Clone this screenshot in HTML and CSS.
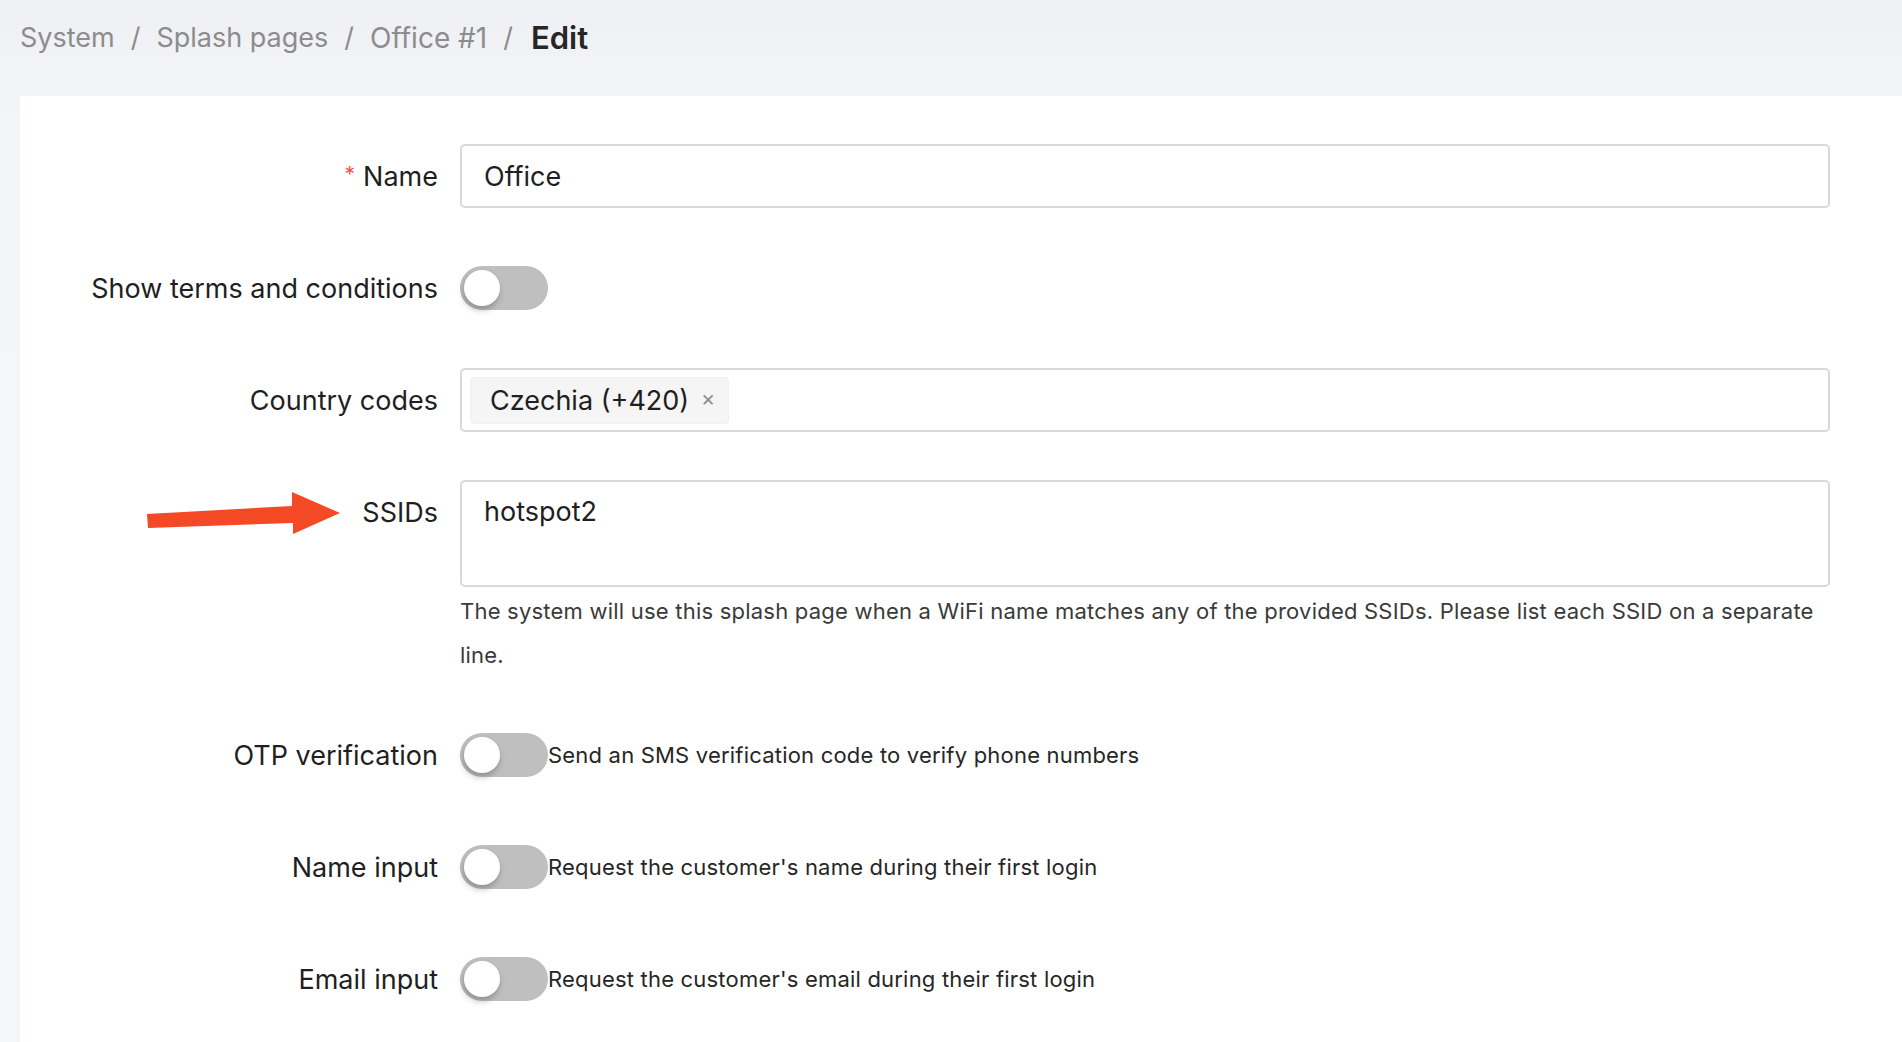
FILE: index.html
```html
<!DOCTYPE html>
<html lang="en">
<head>
<meta charset="utf-8">
<title>Edit splash page</title>
<link rel="stylesheet" href="styles.css">
</head>
<body>
<nav class="breadcrumb">
  <span class="crumb">System</span><span class="sep">/</span>
  <span class="crumb">Splash pages</span><span class="sep">/</span>
  <span class="crumb office">Office #1</span><span class="sep">/</span>
  <span class="crumb current">Edit</span>
</nav>
<main class="card">
  <form class="form">
    <div class="row">
      <div class="label"><span class="req">*</span>Name</div>
      <div class="control"><div class="input">Office</div></div>
    </div>
    <div class="row">
      <div class="label">Show terms and conditions</div>
      <div class="control switch-line"><span class="switch"><span class="knob"></span></span></div>
    </div>
    <div class="row">
      <div class="label">Country codes</div>
      <div class="control">
        <div class="input select">
          <span class="tag">Czechia (+420)<span class="tag-close">&#x2715;</span></span>
        </div>
      </div>
    </div>
    <div class="row row-help">
      <div class="label">SSIDs</div>
      <div class="control">
        <div class="input textarea">hotspot2</div>
        <div class="help">The system will use this splash page when a WiFi name matches any of the provided SSIDs. Please list each SSID on a separate line.</div>
      </div>
    </div>
    <div class="row">
      <div class="label">OTP verification</div>
      <div class="control switch-line"><span class="switch"><span class="knob"></span></span><span class="desc">Send an SMS verification code to verify phone numbers</span></div>
    </div>
    <div class="row">
      <div class="label">Name input</div>
      <div class="control switch-line"><span class="switch"><span class="knob"></span></span><span class="desc">Request the customer's name during their first login</span></div>
    </div>
    <div class="row">
      <div class="label">Email input</div>
      <div class="control switch-line"><span class="switch"><span class="knob"></span></span><span class="desc">Request the customer's email during their first login</span></div>
    </div>
  </form>
  <svg class="arrow" width="200" height="50" viewBox="0 0 200 50" aria-hidden="true">
    <polygon points="0,22 145,14 145,0 193,21 146,42 146,31 1,36" fill="#f34925"/>
  </svg>
</main>
</body>
</html>
```
FILE: styles.css
```css
* { box-sizing: border-box; }
html, body { margin: 0; padding: 0; }
body {
  background: linear-gradient(#eff0f4 0, #f4f5f9 130px, #f5f6fa 100%);
  font-family: Inter, "Noto Sans", "Liberation Sans", sans-serif;
  color: #1f1f1f;
  min-height: 1042px;
  overflow: hidden;
}
.breadcrumb {
  padding: 16px 20px 0;
  height: 96px;
  font-size: 27px;
  line-height: 44px;
  color: #8c8c8c;
  display: flex;
  align-items: flex-start;
}
.sep { margin: 0 16px; }
.crumb.office { font-size: 28px; }
.crumb.current { color: #262626; font-weight: 600; font-size: 31px; margin-left: 2px; }

.card {
  position: relative;
  margin-left: 20px;
  background: #fff;
  padding-top: 48px;
  min-height: 946px;
}
.form { display: flex; flex-direction: column; }
.row {
  display: grid;
  grid-template-columns: 418px 1370px;
  column-gap: 22px;
  margin-bottom: 48px;
  align-items: start;
}
.row-help { margin-bottom: 46px; }
.label {
  height: 64px;
  display: flex;
  align-items: center;
  justify-content: flex-end;
  font-size: 27px;
  color: #1f1f1f;
  white-space: nowrap;
}
.req {
  color: #ff4d4f;
  font-size: 21px;
  margin-right: 8px;
  position: relative;
  top: -2px;
}
.input {
  height: 64px;
  border: 2px solid #d9d9d9;
  border-radius: 5px;
  padding: 0 22px;
  display: flex;
  align-items: center;
  font-size: 27px;
  color: #1f1f1f;
  background: #fff;
}
.select { padding: 0 8px; }
.tag {
  display: inline-flex;
  align-items: center;
  height: 47px;
  padding: 0 13px 0 19px;
  background: #f5f5f5;
  border: 1px solid #f0f0f0;
  border-radius: 4px;
  font-size: 27px;
  color: #1f1f1f;
}
.tag-close {
  margin-left: 12px;
  font-size: 17px;
  color: #8c8c8c;
}
.textarea {
  height: 107px;
  align-items: flex-start;
  padding-top: 8px;
  line-height: 44px;
}
.help {
  margin-top: 2px;
  font-size: 22px;
  line-height: 44px;
  color: #3a3a3a;
  letter-spacing: 0.22px;
}
.switch-line {
  height: 64px;
  display: flex;
  align-items: center;
}
.switch {
  position: relative;
  flex: none;
  width: 88px;
  height: 44px;
  border-radius: 22px;
  background: #bfbfbf;
}
.knob {
  position: absolute;
  left: 4px;
  top: 4px;
  width: 36px;
  height: 36px;
  border-radius: 50%;
  background: #fff;
  box-shadow: -1px 4px 6px rgba(0, 35, 11, 0.28);
}
.desc {
  font-size: 22px;
  letter-spacing: 0.2px;
  color: #262626;
  white-space: nowrap;
}
.arrow {
  position: absolute;
  left: 127px;
  top: 396px;
}
```
